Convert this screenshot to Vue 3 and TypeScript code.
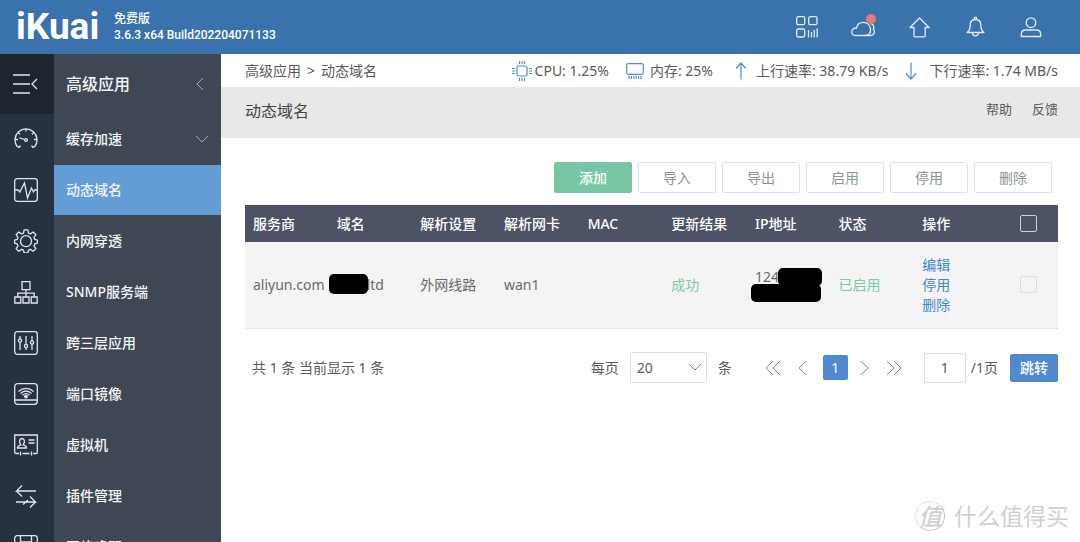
<script setup lang="ts">
import { ref } from 'vue'

interface MenuItem {
  label: string
  expandable?: boolean
}

const menu: MenuItem[] = [
  { label: '缓存加速', expandable: true },
  { label: '动态域名' },
  { label: '内网穿透' },
  { label: 'SNMP服务端' },
  { label: '跨三层应用' },
  { label: '端口镜像' },
  { label: '虚拟机' },
  { label: '插件管理' },
  { label: '网络唤醒' },
]
const active = ref('动态域名')

const tools = ['添加', '导入', '导出', '启用', '停用', '删除']
const columns = ['服务商', '域名', '解析设置', '解析网卡', 'MAC', '更新结果', 'IP地址', '状态', '操作']
const actions = ['编辑', '停用', '删除']

const pageSize = ref('20')
const jumpPage = ref('1')
const allChecked = ref(false)
const rowChecked = ref(false)
</script>

<template>
  <div class="shell">
    <header class="topbar">
      <div class="brand">iKuai</div>
      <div class="version">
        <div>免费版</div>
        <div>3.6.3 x64 Build202204071133</div>
      </div>
      <div class="top-icons">
        <button type="button" aria-label="应用">
          <svg viewBox="0 0 24 24"><rect x="1.7" y="1.7" width="8" height="8" rx="1.5" /><rect x="13.7" y="1.7" width="8.3" height="8" rx="1.5" /><rect x="1.7" y="14" width="8" height="8" rx="1.5" /><path d="M13.5 15v7.5M16.5 17v5.5M19.3 15v7.5M22.2 13.5v9" /></svg>
        </button>
        <button type="button" aria-label="云服务">
          <svg viewBox="0 0 24 24"><path d="M5.2 20.500h9.300c3.500 0 5.500-3 5-6.400-.5-4-3.300-6.800-7-6.800-3.600 0-6.400 2.300-7 5.700C2.800 12.900.7 14.600.7 17c0 2 1.700 3.500 4.500 3.500z" /><path d="M14.500 20.500h5c3.600 0 5-3.800 2.800-6.400 1.500-2.500-.5-5.600-3.400-5.400" /></svg>
          <span class="dot"></span>
        </button>
        <button type="button" aria-label="升级">
          <svg viewBox="0 0 24 24"><path d="M12.500 3 22 12.500h-3.800v8.300a1 1 0 0 1-1 1H8a1 1 0 0 1-1-1v-8.300H3z" stroke-linejoin="round" /></svg>
        </button>
        <button type="button" aria-label="通知">
          <svg viewBox="0 0 24 24"><path d="M4 17.500c2.500-1.500 3.200-3.500 3.200-7.500 0-3.500 2.200-5.500 5.300-5.500s5.300 2 5.300 5.500c0 4 .7 6 3.200 7.500zM9.500 17.500a3 3.300 0 0 0 6 0" stroke-linejoin="round" /><circle cx="12.500" cy="3.300" r="1.200" /></svg>
        </button>
        <button type="button" aria-label="用户">
          <svg viewBox="0 0 24 24"><circle cx="12" cy="7.700" r="4.800" /><path d="M2.300 21.500v-2.300c0-2.800 2-4.200 4.500-4.200h10.400c2.500 0 4.500 1.400 4.500 4.200v2.300z" stroke-linejoin="round" /></svg>
        </button>
      </div>
    </header>

    <div class="body">
      <nav class="rail" aria-label="主菜单">
        <button type="button" class="toggle" aria-label="收起菜单">
          <svg viewBox="0 0 26 24"><path d="M0 3h17M0 12h17M0 21h17M24 7l-5 5 5 5" /></svg>
        </button>
        <a href="#" aria-label="系统概况">
          <svg viewBox="0 0 24 24"><path d="M5 20.500l-1.800-1A11 11 0 1 1 20.800 19.500l-1.800 1-1.500-2M5 20.500l1.500-2M1 12.500h3M23 12.500h-3M12 2v2.600M4.200 5.500l1.900 1.900M19.800 5.500l-1.900 1.900M5.500 10.800l5 1.700" /><circle cx="12" cy="13" r="1.400" /></svg>
        </a>
        <a href="#" aria-label="状态监控">
          <svg viewBox="0 0 24 24"><rect x=".7" y=".7" width="22.600" height="22.600" rx="2.500" /><path d="M1 12h3.200l1.600 2L10.500 5l3 15 4-10 2 4 1.200-2H23" /></svg>
        </a>
        <a href="#" aria-label="系统设置">
          <svg viewBox="0 0 24 24"><path d="M10.100.8h3.800l.6 3.300 1.900.8 2.800-1.900 2.700 2.700-1.900 2.800.8 1.900 2.600.7v3l-2.600.8-.8 1.900 1.900 2.800-2.700 2.700-2.800-1.900-1.900.8-.6 2.800h-3.800l-.6-2.800-1.900-.8-2.800 1.900-2.700-2.700L4 16.800l-.8-1.900-2.600-.8v-3l2.600-.7L4 8.500 2.100 5.700 4.800 3l2.800 1.900 1.900-.8z" stroke-linejoin="round" /><circle cx="12" cy="12.200" r="5.500" /></svg>
        </a>
        <a href="#" aria-label="网络设置">
          <svg viewBox="0 0 24 24"><path d="M8 1.700h8v8H8zM.8 17h6v6h-6zM9 17h6v6H9zM17.200 17h6v6h-6zM12 9.700V17M3.800 17v-3.800h16.400V17" /></svg>
        </a>
        <a href="#" aria-label="流控分流">
          <svg viewBox="0 0 24 24"><rect x=".7" y=".7" width="22.600" height="22.600" rx="2.500" /><path d="M6 5v3M6 11v8M12 5v8.500M12 16.500V19M18 5v5M18 13v6" /><circle cx="6" cy="9.500" r="1.600" /><circle cx="12" cy="15" r="1.600" /><circle cx="18" cy="11.500" r="1.600" /></svg>
        </a>
        <a href="#" aria-label="无线管理">
          <svg viewBox="0 0 24 24"><rect x=".7" y="1.700" width="22.600" height="20.600" rx="3" /><path d="M1 18h22M4.500 9.500c4.500-4.200 10.500-4.200 15 0M6.500 11.500c3.500-3.200 7.500-3.200 11 0M8.500 13.200c2.300-2 4.700-2 7 0" /><circle cx="12" cy="14.600" r="1.300" fill="currentColor" /></svg>
        </a>
        <a href="#" aria-label="认证计费">
          <svg viewBox="0 0 24 24"><path d="M5 20.500H2a1.300 1.300 0 0 1-1.300-1.300V2h22.600v17.200a1.300 1.300 0 0 1-1.300 1.300h-3M8.500 20.500h7M6.500 18.500v4M17.500 18.500v4M14.500 7h6M14.500 10h6M3.500 15c0-2 1-2.500 3.300-3.200C4.800 9 5.300 5.500 8 5.500s3.200 3.500 1.200 6.300c2.300.7 3.300 1.200 3.300 3.200z" /></svg>
        </a>
        <a href="#" aria-label="行为管控">
          <svg viewBox="0 0 24 24"><path d="M22 7H2.500l5.500-5.500M2.500 7 8 12.500M2 18h19.500L16 12.500M21.500 18 16 23.500M9 20.500l5-4.500" /></svg>
        </a>
        <a href="#" aria-label="高级应用">
          <svg viewBox="0 0 24 24"><rect x=".7" y=".7" width="22.600" height="22.600" rx="2.500" /><path d="M6.500 1v22M17.500 1v22M6.500 7h11" /></svg>
        </a>
      </nav>

      <nav class="submenu" aria-label="高级应用">
        <div class="submenu-head">
          <span>高级应用</span>
          <svg class="chev" viewBox="0 0 8 14"><path d="M7 1 1 7l6 6" /></svg>
        </div>
        <a
          v-for="item in menu"
          :key="item.label"
          href="#"
          :class="{ on: item.label === active }"
          @click.prevent="active = item.label"
        >
          <span>{{ item.label }}</span>
          <svg v-if="item.expandable" class="chev down" viewBox="0 0 14 8"><path d="m1 1 6 6 6-6" /></svg>
        </a>
      </nav>

      <main>
        <div class="status">
          <div class="crumb"><span>高级应用</span><span>&gt;</span><span>动态域名</span></div>
          <div class="stats">
            <span class="stat cpu">
              <svg width="20" height="20" viewBox="0 0 20 20"><rect x="5" y="5" width="10" height="10" rx="1.500" /><path d="M7.500 0v3M10 0v3M12.500 0v3M7.500 17v3M10 17v3M12.500 17v3M0 7.500h3M0 10h3M0 12.500h3M17 7.500h3M17 10h3M17 12.500h3" /></svg>
              CPU: 1.25%
            </span>
            <span class="stat mem">
              <svg width="18" height="16" viewBox="0 0 18 16"><rect x=".7" y=".7" width="16.600" height="10.600" rx="1.500" /><path d="M3 13v3M5.400 13v3M7.800 13v3M10.200 13v3M12.600 13v3M15 13v3" /></svg>
              内存: 25%
            </span>
            <span class="stat up">
              <svg width="12" height="18" viewBox="0 0 12 18"><path d="M6 17.500V1M1 6.500 6 1l5 5.500" /></svg>
              上行速率: 38.79 KB/s
            </span>
            <span class="stat">
              <svg width="12" height="18" viewBox="0 0 12 18"><path d="M6 .5V17M1 11.500 6 17l5-5.500" /></svg>
              下行速率: 1.74 MB/s
            </span>
          </div>
        </div>

        <div class="titlebar">
          <h1>动态域名</h1>
          <div class="links"><a href="#">帮助</a><a href="#">反馈</a></div>
        </div>

        <div class="content">
          <div class="tools">
            <button v-for="(t, i) in tools" :key="t" type="button" :class="{ primary: i === 0 }">{{ t }}</button>
          </div>

          <table>
            <thead>
              <tr>
                <th v-for="c in columns" :key="c">{{ c }}</th>
                <th class="check"><input v-model="allChecked" type="checkbox" aria-label="全选" /></th>
              </tr>
            </thead>
            <tbody>
              <tr>
                <td>aliyun.com</td>
                <td><div class="masked domain">ltd<i></i></div></td>
                <td>外网线路</td>
                <td>wan1</td>
                <td></td>
                <td class="ok">成功</td>
                <td><div class="masked ip">124<i></i><b></b></div></td>
                <td class="ok">已启用</td>
                <td><a v-for="a in actions" :key="a" href="#">{{ a }}</a></td>
                <td class="check"><input v-model="rowChecked" type="checkbox" aria-label="选择 aliyun.com" /></td>
              </tr>
            </tbody>
          </table>

          <div class="pager">
            <span class="total">共 1 条 当前显示 1 条</span>
            <label for="size">每页</label>
            <div class="size">
              <select id="size" v-model="pageSize">
                <option>20</option>
                <option>50</option>
                <option>100</option>
              </select>
              <svg viewBox="0 0 14 8"><path d="m1 1 6 6 6-6" /></svg>
            </div>
            <span>条</span>
            <div class="pages">
              <button type="button" aria-label="首页"><svg width="16" height="16" viewBox="0 0 16 16"><path d="M8 1 1 8l7 7M15 1 8 8l7 7" /></svg></button>
              <button type="button" class="wide" aria-label="上一页"><svg width="10" height="16" viewBox="0 0 10 16"><path d="M9 1 2 8l7 7" /></svg></button>
              <button type="button" class="wide current">1</button>
              <button type="button" aria-label="下一页"><svg width="10" height="16" viewBox="0 0 10 16"><path d="m1 1 7 7-7 7" /></svg></button>
              <button type="button" class="wide" aria-label="末页"><svg width="16" height="16" viewBox="0 0 16 16"><path d="m1 1 7 7-7 7M8 1l7 7-7 7" /></svg></button>
            </div>
            <input id="jump" v-model="jumpPage" type="text" />
            <label class="of" for="jump">/1页</label>
            <button type="button" class="go">跳转</button>
          </div>
        </div>
      </main>
    </div>

    <div class="watermark"><span class="seal">值</span><span>什么值得买</span></div>
  </div>
</template>

<style>
body {
  margin: 0;
  overflow: hidden;
}
</style>

<style scoped>
.shell {
  position: relative;
  display: flex;
  flex-direction: column;
  height: 100vh;
  overflow: hidden;
  background: #fff;
  color: #5a5a5a;
  font: 14px/20px "Noto Sans", "Noto Sans CJK SC", sans-serif;
}
.shell * {
  box-sizing: border-box;
}
a {
  color: inherit;
  text-decoration: none;
}
button,
input,
select {
  margin: 0;
  padding: 0;
  font: inherit;
  color: inherit;
}
svg {
  display: block;
  flex: none;
  fill: none;
  stroke: currentColor;
}
.topbar {
  display: flex;
  flex: none;
  align-items: center;
  height: 54px;
  padding: 0 37px 0 16px;
  background: #3a72ae;
  color: #fff;
}
.brand {
  width: 98px;
  font: bold 37px/48px Roboto, sans-serif;
}
.version {
  font: 500 12px/16px Roboto, "Noto Sans CJK SC", sans-serif;
}
.top-icons {
  display: flex;
  gap: 32px;
  margin-left: auto;
}
.top-icons button {
  position: relative;
  width: 24px;
  height: 24px;
  border: 0;
  background: none;
  color: #e3ebf4;
}
.top-icons svg {
  width: 24px;
  height: 24px;
  stroke-width: 1.3;
}
.dot {
  position: absolute;
  top: -1px;
  right: -1px;
  width: 10px;
  height: 10px;
  border-radius: 50%;
  background: #ee7576;
}
.body {
  display: flex;
  flex: 1;
  min-height: 0;
}
.rail {
  flex: none;
  width: 54px;
  overflow: hidden;
  background: #263142;
  color: #e3e6e9;
}
.rail .toggle {
  display: flex;
  align-items: center;
  width: 54px;
  height: 60px;
  padding-left: 13px;
  border: 0;
  background: #1d2630;
}
.rail .toggle svg {
  width: 26px;
  height: 24px;
}
.rail a {
  display: flex;
  align-items: center;
  height: 50px;
  margin-bottom: 1px;
  padding-left: 14px;
}
.rail svg {
  width: 24px;
  height: 24px;
  stroke-width: 1.3;
}
.submenu {
  flex: none;
  width: 167px;
  overflow: hidden;
  background: #3f4755;
  color: #f4f5f6;
  font-weight: 500;
}
.submenu-head,
.submenu a {
  display: flex;
  align-items: center;
  justify-content: space-between;
  height: 50px;
  margin-bottom: 1px;
  padding: 0 12px;
}
.submenu-head {
  height: 60px;
  margin-bottom: 0;
  padding-right: 17px;
  font-size: 16px;
}
.submenu a.on {
  background: #649cd5;
}
.chev {
  width: 8px;
  height: 14px;
  stroke: #a5a9b0;
}
.chev.down {
  width: 14px;
  height: 8px;
}
main {
  flex: 1;
  min-width: 0;
}
.status {
  display: flex;
  align-items: center;
  justify-content: space-between;
  height: 33px;
  padding: 0 22px 0 24px;
}
.crumb,
.stats,
.stat {
  display: flex;
  align-items: center;
}
.crumb {
  gap: 6px;
}
.stats {
  gap: 17px;
}
.stat {
  gap: 12px;
  white-space: nowrap;
}
.stat.cpu {
  gap: 3px;
}
.stat.mem {
  gap: 6px;
}
.stat.up {
  gap: 9px;
  margin-left: 5px;
}
.stat svg {
  stroke: #4a90d0;
  stroke-width: 1.2;
}
.titlebar {
  display: flex;
  justify-content: space-between;
  height: 51px;
  padding: 12px 22px 0 24px;
  background: #e8e8e8;
}
h1 {
  margin: 0;
  font-size: 16px;
  line-height: 24px;
  font-weight: 400;
  color: #444;
}
.links {
  display: flex;
  gap: 20px;
  font-size: 13px;
}
.content {
  padding: 24px 22px 0 24px;
}
.tools {
  display: flex;
  justify-content: flex-end;
  gap: 6px;
  padding-right: 6px;
}
.tools button {
  width: 78px;
  height: 31px;
  border: 1px solid #e0e0e0;
  border-radius: 2px;
  background: #fff;
  color: #8a9499;
}
.tools .primary {
  border-color: #78c7a4;
  background: #78c7a4;
  color: #fff;
  font-weight: 500;
}
table {
  width: 100%;
  margin-top: 12px;
  border-collapse: collapse;
  table-layout: fixed;
}
th,
td {
  padding: 0 0 0 8px;
  text-align: left;
  white-space: nowrap;
}
th {
  height: 37px;
  background: #4e5265;
  color: #fff;
  font-weight: 500;
}
td {
  height: 86px;
  border-bottom: 1px solid #e3e3e3;
  background: #f4f4f4;
  color: #6a6a6a;
}
td a {
  display: block;
  color: #4289cd;
}
td.ok {
  color: #7cc9a5;
}
.check {
  width: 60px;
  padding: 0;
  text-align: center;
}
.check input {
  appearance: none;
  display: block;
  width: 17px;
  height: 17px;
  margin: 0 auto;
  border: 1px solid #ddd;
  border-radius: 2px;
}
th.check input {
  border-color: #d0d1d6;
}
.masked {
  position: relative;
}
.masked i,
.masked b {
  position: absolute;
  border-radius: 5px;
  background: #000;
}
.domain {
  padding-left: 30px;
}
.domain i {
  top: -1px;
  left: -8px;
  width: 39px;
  height: 20px;
}
.ip {
  height: 36px;
}
.ip i {
  top: 1px;
  left: 23px;
  width: 44px;
  height: 18px;
}
.ip b {
  top: 17px;
  left: -4px;
  width: 70px;
  height: 18px;
}
.pager {
  display: flex;
  align-items: center;
  height: 32px;
  margin-top: 23px;
  white-space: nowrap;
}
.total {
  margin-right: auto;
  padding-left: 7px;
}
.size {
  position: relative;
  margin: 0 11px;
}
.size select {
  appearance: none;
  display: block;
  width: 77px;
  height: 31px;
  padding: 0 6px;
  border: 1px solid #ddd;
  border-radius: 2px;
  background: #fff;
}
.size svg {
  position: absolute;
  top: 11px;
  right: 5px;
  width: 14px;
  height: 8px;
  stroke: #888;
  pointer-events: none;
}
.pages {
  display: flex;
  align-items: center;
  gap: 12px;
  margin: 0 22px 0 33px;
}
.pages button {
  border: 0;
  background: none;
}
.pages .wide {
  margin-left: 4px;
}
.pages svg {
  stroke: #888;
}
.pages .current {
  width: 25px;
  height: 25px;
  border-radius: 2px;
  background: #5089cf;
  color: #fff;
}
.pager input {
  width: 42px;
  height: 30px;
  border: 1px solid #ddd;
  border-radius: 2px;
  text-align: center;
}
.of {
  margin: 0 12px 0 5px;
}
.go {
  width: 48px;
  height: 28px;
  border: 0;
  border-radius: 2px;
  background: #5089cf;
  color: #fff;
  font-weight: 500;
}
.watermark {
  position: absolute;
  right: 11px;
  bottom: 10px;
  display: flex;
  align-items: center;
  gap: 9px;
  color: #d0d0d0;
  font-size: 23px;
  line-height: 32px;
}
.seal {
  width: 30px;
  height: 30px;
  border: 1px solid #e0e0e0;
  border-right-color: #c4c4c4;
  border-bottom-color: #c4c4c4;
  border-radius: 50%;
  font-weight: 500;
  font-style: italic;
  line-height: 28px;
  text-align: center;
}
</style>
